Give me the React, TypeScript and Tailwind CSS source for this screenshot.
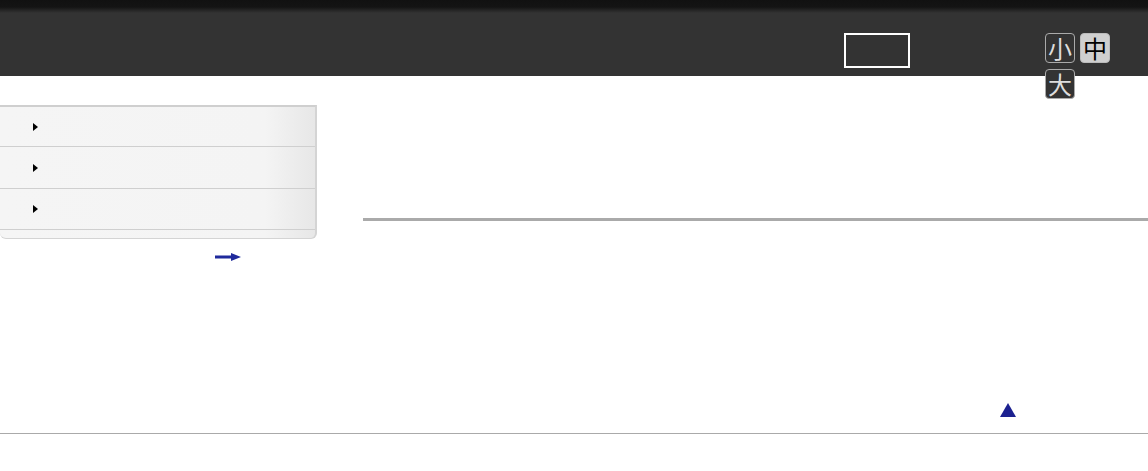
import { ReactNode } from "react";

function SizeButton({ label, active }: { label: string; active?: boolean }) {
  return (
    <button
      className={
        active
          ? "flex h-[30px] w-[30px] items-center justify-center rounded-[4px] border border-[#bbb] bg-[#cfcfcf] text-[24px] leading-none text-black"
          : "flex h-[30px] w-[30px] items-center justify-center rounded-[4px] border border-[#aaa] bg-[#333] text-[24px] leading-none text-[#ddd]"
      }
      style={{ fontFamily: '"Noto Sans CJK JP", "Noto Sans", sans-serif' }}
    >
      {label}
    </button>
  );
}

function MenuRow({ h, children }: { h: string; children?: ReactNode }) {
  return (
    <div className={`flex items-center border-b border-[#cfcfcf] pl-[33px] ${h}`}>
      <span className="h-0 w-0 border-y-[4px] border-l-[5px] border-y-transparent border-l-black" />
      {children}
    </div>
  );
}

export default function App() {
  return (
    <div className="w-[1148px] bg-white" style={{ fontFamily: '"Liberation Sans", Arial, sans-serif' }}>
      <header className="relative flex h-[76px] bg-[linear-gradient(to_bottom,#111_0px,#141414_7px,#333_13px,#333_100%)]">
        <div className="ml-[844px] mt-[33px] h-[35px] w-[66px] border-2 border-white" />
        <div className="ml-[135px] mt-[33px] flex w-[70px] flex-wrap content-start gap-x-[5px] gap-y-[6px]">
          <SizeButton label="小" />
          <SizeButton label="中" active />
          <SizeButton label="大" />
        </div>
      </header>

      <main className="flex h-[358px] flex-col border-b border-[#aaa]">
        <div className="flex pt-[29px]">
          <aside className="w-[317px]">
            <div className="rounded-b-[6px] border-t-2 border-r-2 border-b border-[#d4d4d4] border-t-[#cfcfcf] bg-[linear-gradient(to_right,#f5f5f5_0%,#f4f4f4_84%,#e7e7e7_100%)]">
              <MenuRow h="h-[40px]" />
              <MenuRow h="h-[42px]" />
              <MenuRow h="h-[41px]" />
              <div className="h-[8px]" />
            </div>
            <a href="#" className="ml-[215px] mt-[14px] block w-[26px]">
              <svg className="block" width="26" height="8" viewBox="0 0 26 8">
                <rect x="0" y="2.5" width="18" height="3" fill="#1f2a9c" />
                <polygon points="16,0 26,4 16,8" fill="#1f2a9c" />
              </svg>
            </a>
          </aside>
          <section className="ml-[46px] flex-1">
            <div className="mt-[113px] h-[3px] bg-[#aaa]" />
          </section>
        </div>
        <div className="mt-auto flex justify-end pb-[16px] pr-[132px]">
          <a href="#" className="block">
            <svg className="block" width="16" height="14" viewBox="0 0 16 14">
              <polygon points="8,0 16,14 0,14" fill="#1c2190" />
            </svg>
          </a>
        </div>
      </main>
      <div className="h-[37px]" />
    </div>
  );
}
